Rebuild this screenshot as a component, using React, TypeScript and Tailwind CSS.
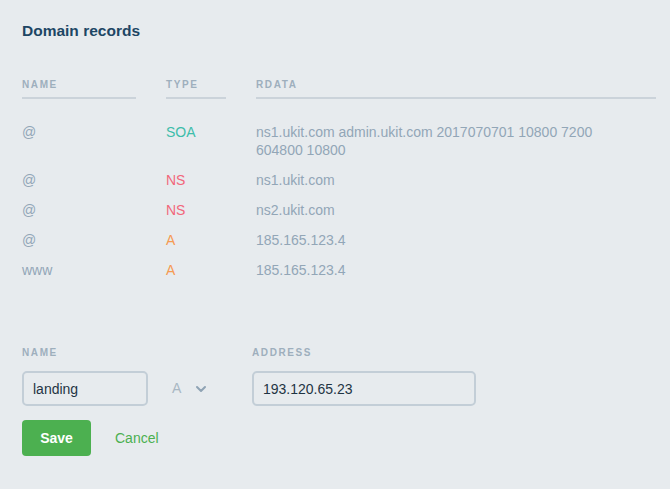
import { ChevronDown } from "lucide-react";

type DnsRecord = { name: string; type: string; rdata: string };

const records: DnsRecord[] = [
  { name: "@", type: "SOA", rdata: "ns1.ukit.com admin.ukit.com 2017070701 10800 7200 604800 10800" },
  { name: "@", type: "NS", rdata: "ns1.ukit.com" },
  { name: "@", type: "NS", rdata: "ns2.ukit.com" },
  { name: "@", type: "A", rdata: "185.165.123.4" },
  { name: "www", type: "A", rdata: "185.165.123.4" },
];

function typeColor(type: string): string {
  if (type === "SOA") return "text-[#3dbdaa]";
  if (type === "NS") return "text-[#f2667b]";
  return "text-[#f69a52]";
}

export default function App() {
  return (
    <div className="h-[489px] w-[670px] overflow-hidden bg-[#e7ebee] px-[22px] pt-[22px] font-['Liberation_Sans',sans-serif]">
      <h1 className="text-[15.5px] font-bold leading-[18px] text-[#1d4664]">Domain records</h1>

      <div className="mt-[39px] flex text-[10px] font-bold leading-[12px] tracking-[1.6px] text-[#9eafbd]">
        <div className="w-[114px] shrink-0 border-b-2 border-[#cbd3da] pb-[6px]">NAME</div>
        <div className="ml-[30px] w-[60px] shrink-0 border-b-2 border-[#cbd3da] pb-[6px]">TYPE</div>
        <div className="ml-[30px] w-[400px] shrink-0 border-b-2 border-[#cbd3da] pb-[6px]">RDATA</div>
      </div>

      <div className="mt-[24px] flex flex-col gap-3">
        {records.map((r, i) => (
          <div key={i} className="flex text-[14px] leading-[18px]">
            <div className="w-[144px] shrink-0 text-[#92a6b7]">{r.name}</div>
            <div className={`w-[90px] shrink-0 ${typeColor(r.type)}`}>{r.type}</div>
            <div className="w-[370px] shrink-0 text-[#92a6b7]">{r.rdata}</div>
          </div>
        ))}
      </div>

      <div className="mt-[68px] flex text-[10px] font-bold leading-[12px] tracking-[1.6px] text-[#9eafbd]">
        <div className="w-[230px] shrink-0">NAME</div>
        <div>ADDRESS</div>
      </div>

      <div className="mt-[12px] flex items-center">
        <input
          defaultValue="landing"
          className="h-[35px] w-[126px] shrink-0 rounded-[5px] border-2 border-[#c3ced7] bg-[#e7ebee] px-[9px] text-[14px] text-[#1f3444] outline-none"
        />
        <div className="ml-[24px] flex w-[80px] shrink-0 items-center text-[14px] text-[#a9b7c3]">
          <span>A</span>
          <ChevronDown className="ml-[12px] h-[16px] w-[16px] text-[#8fa3b4]" strokeWidth={3} />
        </div>
        <input
          defaultValue="193.120.65.23"
          className="h-[35px] w-[224px] shrink-0 rounded-[5px] border-2 border-[#c3ced7] bg-[#e7ebee] px-[9px] text-[14px] text-[#1f3444] outline-none"
        />
      </div>

      <div className="mt-[14px] flex items-center">
        <button className="h-[36px] w-[69px] rounded-[4px] bg-[#4cb050] text-[14px] font-bold text-white">
          Save
        </button>
        <button className="ml-[24px] text-[14px] text-[#4cb050]">Cancel</button>
      </div>
    </div>
  );
}
